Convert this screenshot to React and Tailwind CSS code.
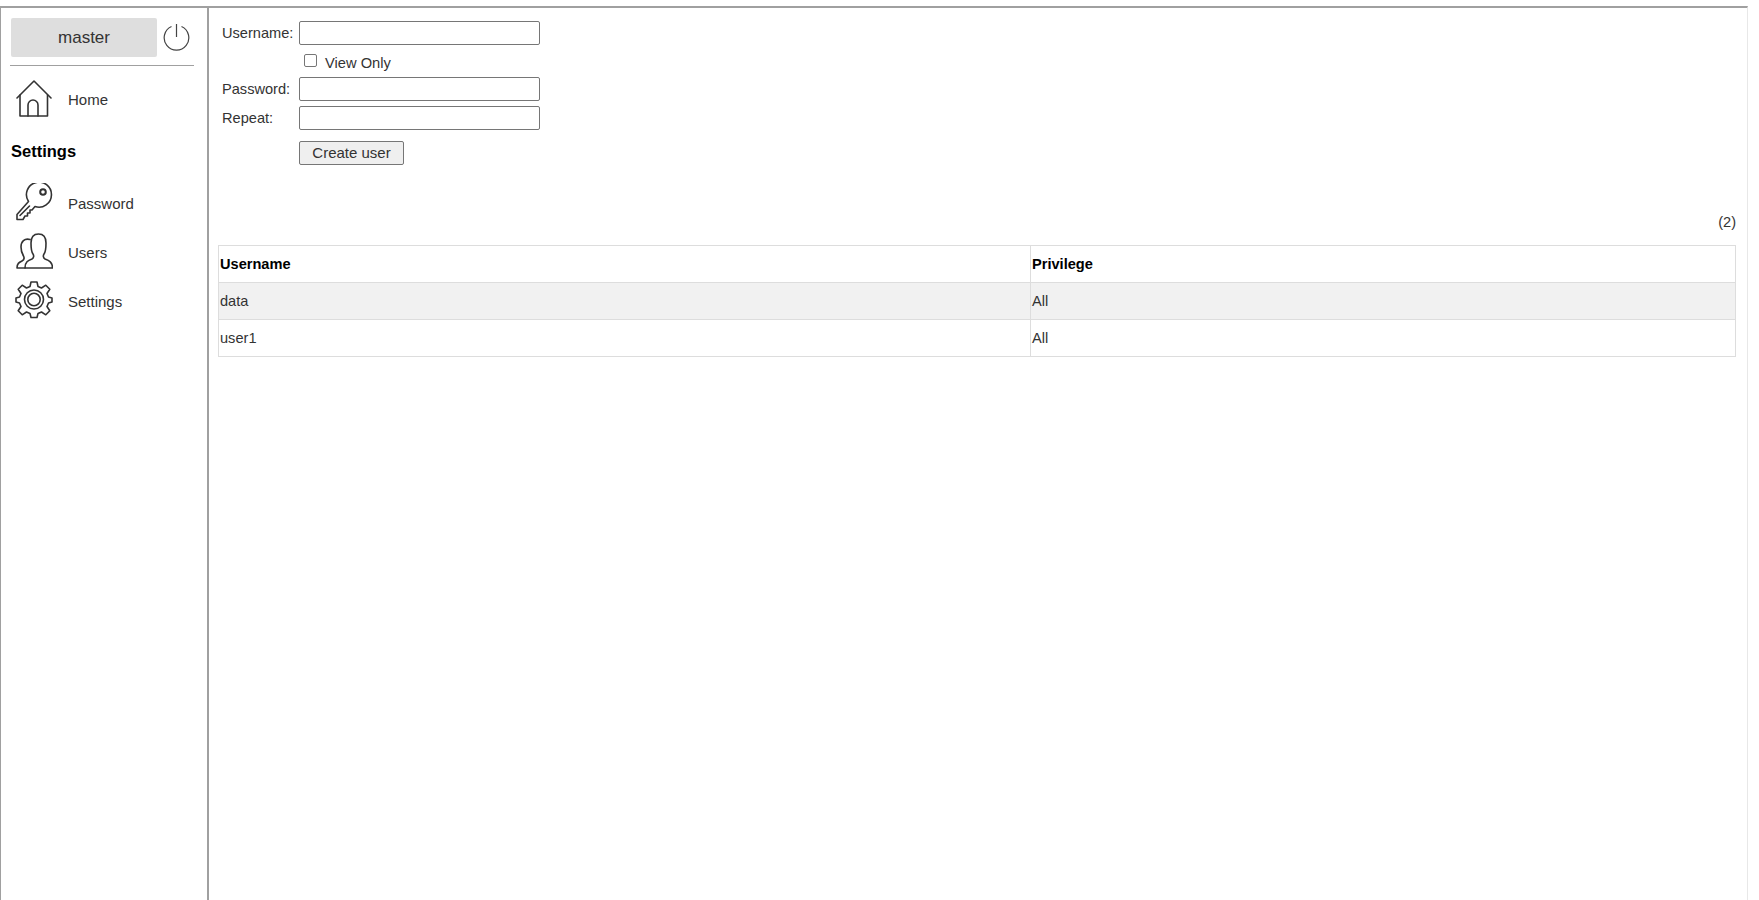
const ff = "font-['Liberation_Sans',Arial,sans-serif]";

const Icon = ({ children }) => (
  <svg width="38" height="38" viewBox="0 0 38 38" fill="none" stroke="#333" strokeWidth="1.600" strokeLinejoin="round" strokeLinecap="round">
    {children}
  </svg>
);

const HomeIcon = () => (
  <Icon>
    <path d="M2 18 L19 1 L36 18" />
    <path d="M5 15 V36 H32.500 V15" />
    <path d="M13 36 V25 A5 5 0 0 1 23 25 V36" />
  </Icon>
);

const KeyIcon = () => (
  <Icon>
    <path d="M13.500 18.500 A12.500 12.500 0 1 1 20 23.500 L17 27 H15 V30 H12.500 V33 H10 L8 36.500 H2 V31.500 Z" />
    <circle cx="28" cy="9" r="2.800" strokeWidth="2" />
    <path d="M5 32.500 L14.500 23" />
  </Icon>
);

const UsersIcon = () => (
  <Icon>
    <path d="M10 36 C10 30 13 28.500 17 27 C19 26 19 23.500 18 22 C16.500 20 16 16 16 11 C16 5 19 2 23.500 2 C28 2 31 5 31 11 C31 16 30.500 20 29 22 C28 23.500 28 26 30 27 C34 28.500 37.500 30 37.500 36 Z" />
    <path d="M15 7.500 C9.500 6 6 9.500 6 15 C6 19 7 21.500 8.500 24 C9.500 26 9 28 7 29 C4 30.500 2 31.500 2 36 H10" />
  </Icon>
);

const GearIcon = () => (
  <Icon>
    <path d="M16 1 H22 L23 5.500 L26.500 7 L30.800 4.200 L34.800 8.200 L32 12.500 L33.500 16 L37 17 V21 L33.500 22 L32 25.500 L34.800 29.800 L30.800 33.800 L26.500 31 L23 32.500 L22 36.500 H16 L15 32.500 L11.500 31 L7.200 33.800 L3.200 29.800 L6 25.500 L4.500 22 L1 21 V17 L4.500 16 L6 12.500 L3.200 8.200 L7.200 4.200 L11.500 7 L15 5.500 Z" />
    <circle cx="19" cy="18.500" r="9.500" />
    <circle cx="19" cy="18.500" r="6.200" />
  </Icon>
);

const NavItem = ({ icon, label, className = "", textClass = "mt-[5px]" }) => (
  <div className={`flex items-center h-[38px] pl-[14px] ${className}`}>
    {icon}
    <span className={`ml-[15px] text-[15px] text-[#333] ${textClass}`}>{label}</span>
  </div>
);

const Row = ({ label, className = "" }) => (
  <div className={`flex items-center h-[24px] ${className}`}>
    <label className="w-[81px] pl-[4px] pt-[1px] text-[14.6px] text-[#333]">{label}</label>
    <input type="text" className="w-[241px] h-[24px] bg-white border border-[#767676] rounded-[2px]" />
  </div>
);

const Th = ({ children, className = "" }) => (
  <th className={`text-left font-bold text-[14.6px] text-black px-[1px] pt-[1px] border border-[#dddddd] ${className}`}>{children}</th>
);
const Td = ({ children, className = "" }) => (
  <td className={`text-left text-[14.6px] text-[#333] px-[1px] pt-[1px] border border-[#dddddd] ${className}`}>{children}</td>
);

export default function App() {
  return (
    <div className={`${ff} h-[900px] w-[1759px] overflow-hidden bg-white pt-[6px]`}>
      <div className="flex h-[894px] w-[1748px] border-t-2 border-[#a0a0a0] border-l border-l-[#a0a0a0] border-r border-r-[#e8e8e8]">
        <aside className="w-[208px] shrink-0 border-r-[2px] border-[#a0a0a0]">
          <div className="flex items-center pl-[10px] pt-[10px]">
            <div className="w-[146px] h-[39px] bg-[#dedede] rounded-[2px] flex items-center justify-center text-[17px] text-[#333]">master</div>
            <svg className="ml-[6px]" width="27" height="27" viewBox="0 0 27 27" fill="none" stroke="#444" strokeWidth="1.200">
              <path d="M8.500 2.500 A12.300 12.300 0 1 0 18.500 2.500" />
              <path d="M13.500 0 V13" />
            </svg>
          </div>
          <div className="ml-[9px] mr-[13px] mt-[8px] border-t border-[#a0a0a0]" />
          <NavItem icon={<HomeIcon />} label="Home" className="mt-[14px]" textClass="mt-[3px]" />
          <h2 className="ml-[10px] mt-[24px] text-[16.5px] leading-[18px] font-bold text-black">Settings</h2>
          <NavItem icon={<KeyIcon />} label="Password" className="mt-[23px]" />
          <NavItem icon={<UsersIcon />} label="Users" className="mt-[11px]" />
          <NavItem icon={<GearIcon />} label="Settings" className="mt-[11px]" />
        </aside>
        <main className="flex-1 pl-[9px] pr-[11px]">
          <Row label="Username:" className="mt-[13px]" />
          <label className="flex items-center h-[20px] mt-[7px] ml-[82px] text-[14.7px] text-[#333]">
            <input type="checkbox" className="w-[13px] h-[13px] mx-[4px] mb-[3px] appearance-none bg-white border border-[#767676] rounded-[2px]" />
            <span className="ml-[4px] mt-[3px]">View Only</span>
          </label>
          <Row label="Password:" className="mt-[5px]" />
          <Row label="Repeat:" className="mt-[5px]" />
          <button className="block ml-[81px] mt-[11px] w-[105px] h-[24px] bg-[#efefef] border border-[#767676] rounded-[2px] text-[15px] text-[#333]">Create user</button>
          <div className="mt-[49px] text-right text-[14.6px] leading-[16px] text-[#333]">(2)</div>
          <table className="w-full mt-[15px] border-collapse table-fixed">
            <colgroup>
              <col className="w-[812px]" />
              <col />
            </colgroup>
            <thead>
              <tr className="h-[37px]"><Th>Username</Th><Th>Privilege</Th></tr>
            </thead>
            <tbody>
              <tr className="h-[37px] bg-[#f1f1f1]"><Td>data</Td><Td>All</Td></tr>
              <tr className="h-[37px]"><Td>user1</Td><Td>All</Td></tr>
            </tbody>
          </table>
        </main>
      </div>
    </div>
  );
}
